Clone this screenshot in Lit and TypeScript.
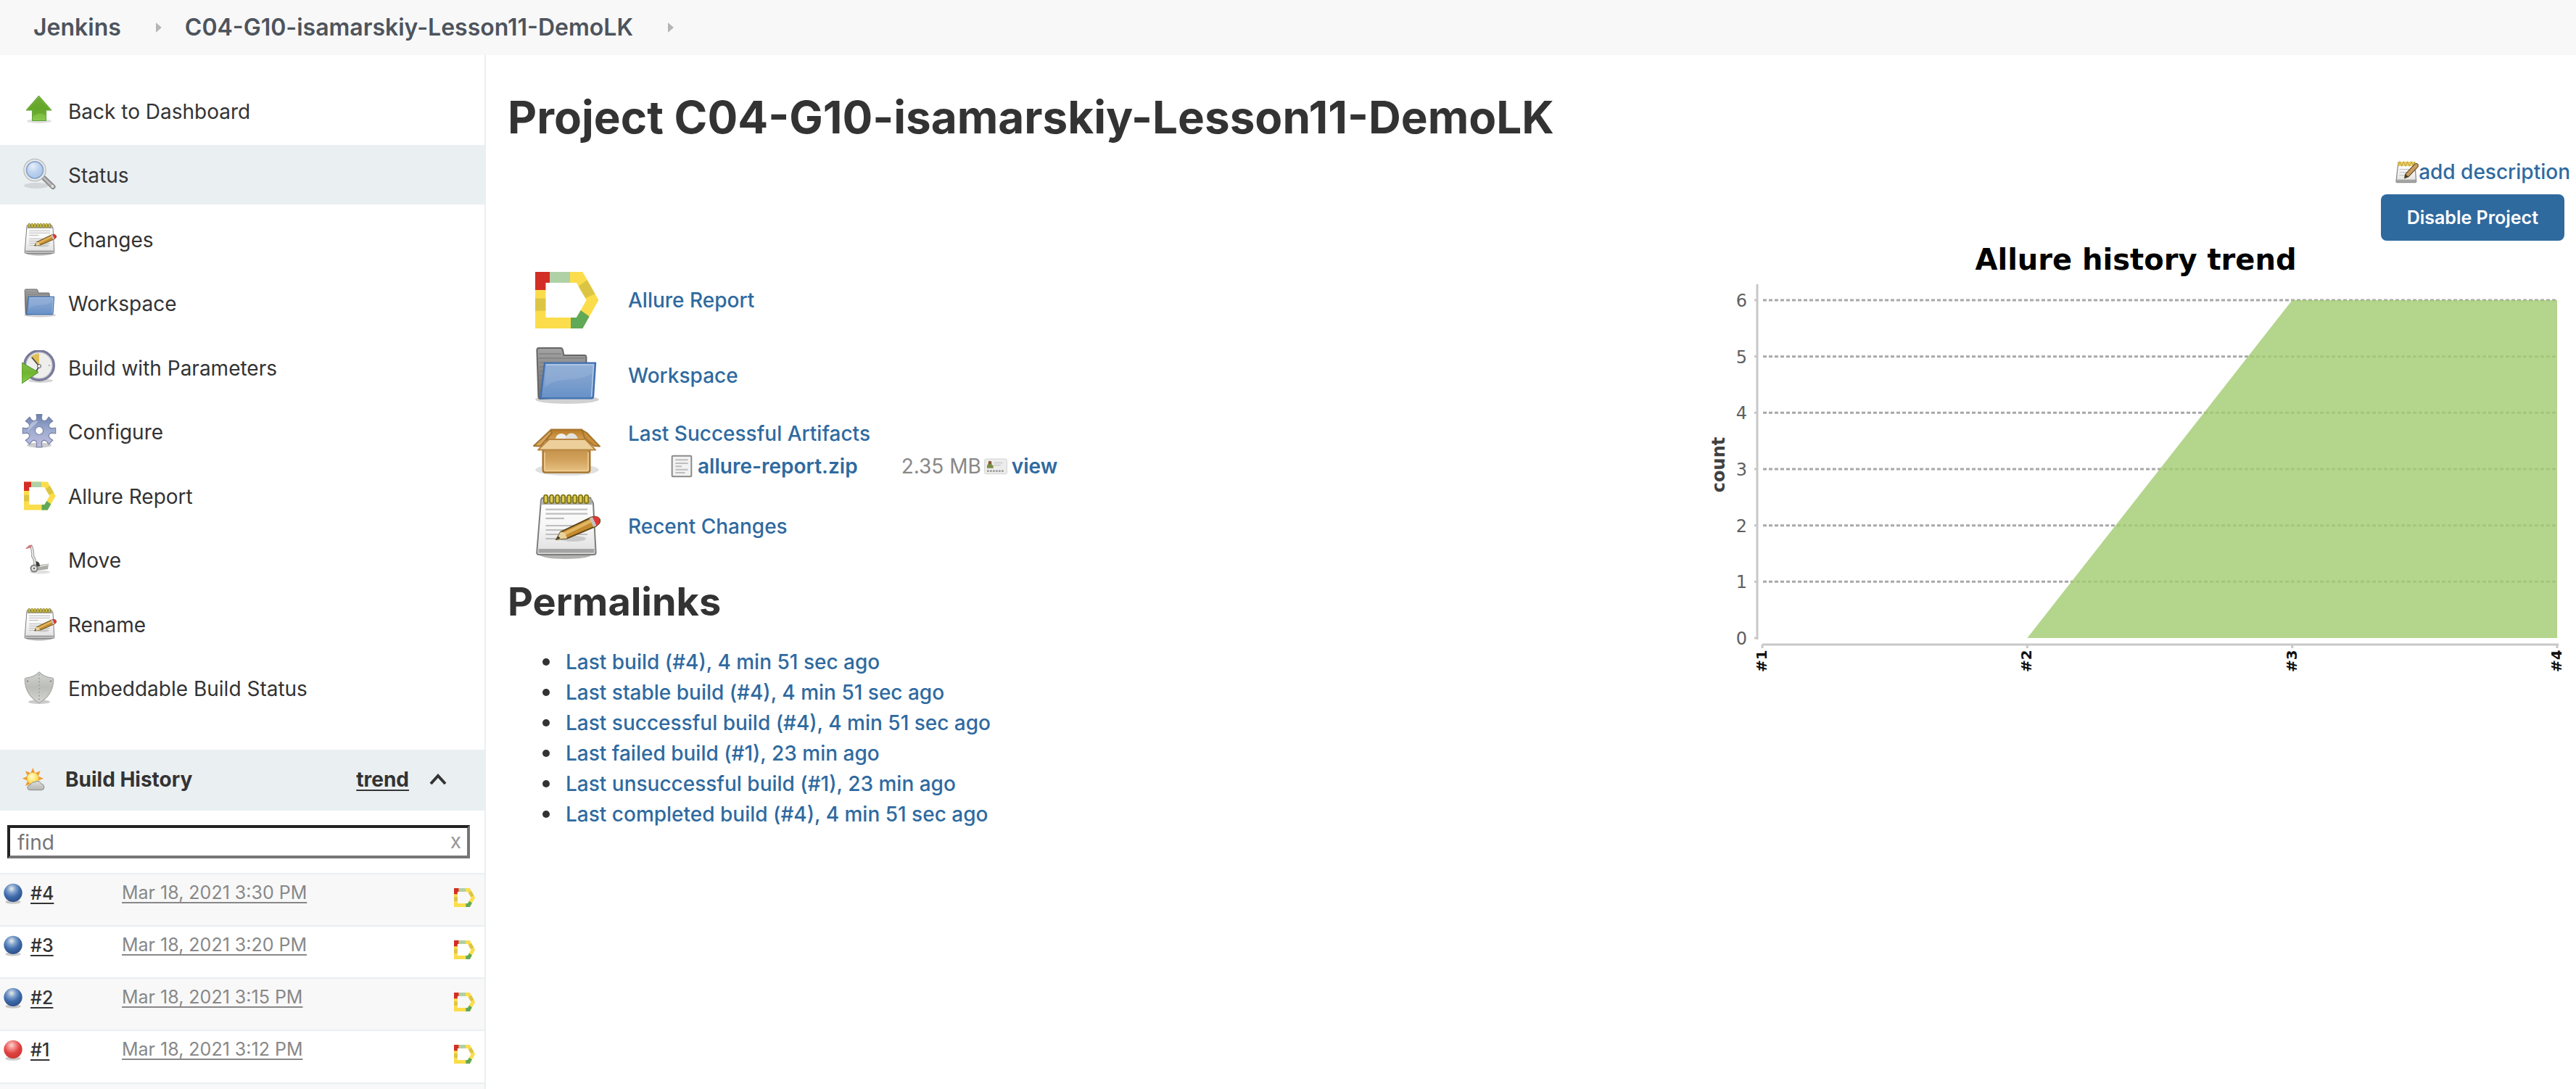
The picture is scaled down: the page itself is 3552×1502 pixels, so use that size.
import { LitElement, html, svg, css, nothing, type TemplateResult } from "lit";
import { customElement, state } from "lit/decorators.js";

/* ---------- icons ---------- */

const gearPath = (() => {
  const pts: string[] = [];
  for (let i = 0; i < 8; i++) {
    const base = (i * Math.PI) / 4 - Math.PI / 2;
    const at = (r: number, deg: number) => {
      const a = base + (deg * Math.PI) / 180;
      return `${(24 + r * Math.cos(a)).toFixed(2)} ${(23 + r * Math.sin(a)).toFixed(2)}`;
    };
    pts.push(at(15, -16), at(18, -10), at(23, -10), at(23, 10), at(18, 10), at(15, 16));
  }
  return `M${pts.join("L")}Z M24 17.5a5.5 5.5 0 1 0 0.01 0Z`;
})();

const shapes: Record<string, TemplateResult> = {
  up: svg`
    <ellipse cx="24" cy="38" rx="17" ry="3" fill="#000" opacity=".12"/>
    <path d="M23.5 3L41 23H33.5V37.500H14.500V23H6Z" fill="url(#g-green)" stroke="#5f9e35" stroke-width="1"/>
    <path d="M23.500 5L38 22H32.500V30C27 26 20 27 15.500 32V22H9Z" fill="#4d8a1c" opacity=".35"/>`,
  search: svg`
    <ellipse cx="20" cy="39" rx="17" ry="4" fill="#000" opacity=".1"/>
    <path d="M30 28L43 40.500" stroke="#8e8e8e" stroke-width="7" stroke-linecap="round"/>
    <path d="M31 29L42 39.500" stroke="#bdbdbd" stroke-width="3" stroke-linecap="round"/>
    <circle cx="42.500" cy="40" r="2" fill="#e4e4e4"/>
    <circle cx="18" cy="17.500" r="13.500" fill="url(#g-lens)" stroke="#b9bbbd" stroke-width="4.500"/>
    <circle cx="18" cy="17.500" r="13.500" fill="none" stroke="#e9eaeb" stroke-width="2"/>
    <circle cx="18" cy="17.500" r="11.300" fill="none" stroke="#7c9fd0" stroke-width="1.300"/>`,
  notepad: svg`
    <ellipse cx="24" cy="43.500" rx="18" ry="3" fill="#000" opacity=".3"/>
    <path d="M9 4.300H41L43 8L44.800 42Q44.800 43.500 43.300 43.500H5.700Q4 43.500 4.100 42L7 6Q7.200 4.300 9 4.300Z" fill="url(#g-paper)" stroke="#7d7d7a" stroke-width="1"/>
    <path d="M8 5H42L42.300 9H7.500Z" fill="#a9aca4"/>
    <path d="M5.300 39.500H43.700V42.300H5.200Z" fill="#a4a4a4"/>
    ${[10.3, 14.3, 18.3, 22.3, 26.3, 30.3, 34.3, 38.3].map(
      (x) => svg`<rect x=${x - 1.3} y="2.300" width="2.600" height="5.700" rx="1.300" fill="#dccd4e" stroke="#857618" stroke-width=".9"/>`,
    )}
    ${[
      [12.3, 39],
      [15.3, 39],
      [18.5, 23],
      [23.5, 39],
      [26.5, 36],
      [29.5, 39],
      [32.5, 22],
    ].map(([y, x]) => svg`<path d="M10.200 ${y}H${x}" stroke="#bebebe" stroke-width="1.100"/>`)}
    <ellipse cx="29" cy="32.500" rx="9" ry="2" fill="#000" opacity=".14"/>
    <path d="M17.600 33L20.500 27.800L41.500 17.800Q46 16.300 47.600 19.500Q48.300 21.500 45 23.800L25 32.300Z" fill="#c38b2e" stroke="#5b4418" stroke-width=".9"/>
    <path d="M22 28.500L41.500 19L42.500 21L23 30.500Z" fill="#e3b563"/>
    <path d="M17.600 33L20.500 27.800L23.500 28.500L25 32.300Z" fill="#e8d39c"/>
    <path d="M17.600 33L18.800 30.800L20.300 32.300Z" fill="#3c2f18"/>
    <path d="M40.300 18.400L42.500 17.500L45.300 23.500L43.200 24.500Z" fill="#c3c3c3"/>
    <path d="M42.500 17.500Q46.500 16.300 47.500 19.500Q48 21.700 45.300 23.500Z" fill="#e0383a"/>`,
  folder: svg`
    <ellipse cx="25" cy="40.500" rx="22" ry="3" fill="#000" opacity=".18"/>
    <path d="M5.500 5H20.500Q21.700 5 22 6.500L22.700 10H37Q38.200 10 38.200 11.500V38L6.500 40Q5.300 40 5.200 38.500L4.200 6.500Q4.200 5 5.500 5Z" fill="url(#g-gray)" stroke="#666" stroke-width="1"/>
    <path d="M5.500 9H21M5.500 12H37M6 15H10M6 18H9M6 21H9M6 24H9M6 27H8.500M6 30H8.500M6 33H8M6 36H8" stroke="#777" stroke-width=".7" opacity=".7"/>
    <path d="M9.500 15.300H44.500L43 38.500Q42.900 39.700 41.700 39.700H6.700Z" fill="url(#g-blue)" stroke="#4170b1" stroke-width="1.200" stroke-linejoin="round"/>
    <path d="M10.500 16.500H43.300L42.900 22C32 30 21 23 9.600 32Z" fill="#fff" opacity=".1"/>
    <path d="M10.400 16.500H43.200L41.800 38.500" fill="none" stroke="#b4cbe8" stroke-width=".7"/>`,
  clock: svg`
    <ellipse cx="26" cy="42" rx="17" ry="3" fill="#000" opacity=".16"/>
    <circle cx="24" cy="21" r="20" fill="#eeeeec" stroke="#7a7a9a" stroke-width="4"/>
    <circle cx="24" cy="21" r="18" fill="none" stroke="#c5c5cf" stroke-width="1.200"/>
    <path d="M24 21L12 10Q17 4.500 24 4.500Z" fill="#e0bf57"/>
    <path d="M24 22L14 10M24 22L19 31" stroke="#4a4a48" stroke-width="1.800"/>
    <circle cx="24" cy="22" r="2.500" fill="#eee" stroke="#555" stroke-width="1"/>
    <circle cx="38" cy="21" r="1" fill="#999"/>
    <path d="M0 17L23 30.500L0 46Z" fill="url(#g-green)" stroke="#4e8f28" stroke-width="1"/>`,
  gear: svg`
    <ellipse cx="24" cy="43" rx="17" ry="3.500" fill="#000" opacity=".2"/>
    <path d=${gearPath} fill="url(#g-gear)" fill-rule="evenodd" stroke="#7683a8" stroke-width="1.200" stroke-linejoin="round"/>
    <path d="M8 24C10 14 15 9 22 9C22 14 14 17 8 24Z" fill="#fff" opacity=".35"/>`,
  allure: svg`
    <path d="M3 4.500H35.700L46.700 24L35.700 43.500H3ZM10.200 12V36H31.400L38.300 24L31.400 12Z" fill="#fbdd4b" fill-rule="evenodd"/>
    <path d="M3 4.500H13V12H10.200V17H3Z" fill="#d32e25"/>
    <path d="M13 4.500H27V12H13Z" fill="#b0d0a5"/>
    <path d="M38.800 10L44.300 19.800L37.600 22.500L32.800 14.400Z" fill="#dcc544"/>
    <path d="M3 22.800H10.200V31.300H3Z" fill="#dcc544"/>
    <path d="M34.400 31L40.300 35.300L35.700 43.500H27.500V36H31.400Z" fill="#60a956"/>`,
  truck: svg`
    <ellipse cx="25" cy="41" rx="14" ry="2.500" fill="#000" opacity=".12"/>
    <path d="M13 5Q16 14 15 19Q19 24 18 33" fill="none" stroke="#9b9d99" stroke-width="4"/>
    <path d="M13 5Q16 14 15 19Q19 24 18 33" fill="none" stroke="#e9e9e7" stroke-width="2"/>
    <path d="M6 8.500L10 4.500L14 4L12 7Z" fill="#d98484" stroke="#c96a6a" stroke-width="1"/>
    <path d="M19 32L37 29.500L36 37L20 39Z" fill="#a9aca5"/>
    <path d="M21 34L36 31" stroke="#dfe0dc" stroke-width="1.500"/>
    <path d="M20 26Q25 27 25 33L20 34Z" fill="#3d3d3b"/>
    <circle cx="17" cy="36" r="4.500" fill="#e0e0de" stroke="#7d7f7b" stroke-width="2"/>
    <circle cx="17" cy="36" r="1.200" fill="#666"/>`,
  shield: svg`
    <ellipse cx="24" cy="43" rx="15" ry="3" fill="#000" opacity=".2"/>
    <path d="M24 2Q31 9 42 10Q44 10.500 43.800 13Q43 34 24 44.500Q5 34 4.200 13Q4 10.500 6 10Q17 9 24 2Z" fill="url(#g-shield)" stroke="#a9aba6" stroke-width="1.200"/>
    <path d="M24 5V42" stroke="#979992" stroke-width="1.600" stroke-dasharray="1.600 3.200"/>
    <circle cx="8" cy="14.500" r="1.200" fill="#8a8c87"/><circle cx="40" cy="14.500" r="1.200" fill="#8a8c87"/>`,
  weather: svg`
    ${[0, 45, 90, 135, 180, 225, 270, 315].map(
      (a) => svg`<path d="M23 0L27 10H19Z" fill="#f0992a" transform="rotate(${a} 23 22)"/>`,
    )}
    <circle cx="23" cy="22" r="12.500" fill="url(#g-sun)" stroke="#f0a63c" stroke-width="1.500"/>
    <path d="M17 46Q11 45.500 12 39.500Q13 35 18 35.500Q20 29 27 29.500Q31 26 36 28.500Q40 31 40.500 33Q46 34 46.500 40Q46 46 41 46Z" fill="url(#g-cloud)" stroke="#8d8d8a" stroke-width="1.500"/>`,
  box: svg`
    <ellipse cx="25" cy="37" rx="22" ry="4" fill="#000" opacity=".12"/>
    <path d="M14 9.300H35L38.500 17H11Z" fill="url(#g-inside)" stroke="#a3732c" stroke-width="1"/>
    <circle cx="21" cy="16" r="4" fill="#efefec"/><circle cx="28" cy="16" r="4.200" fill="#e2e2df"/>
    <path d="M13.500 9.700L2 20.500L6.500 20.800L14.500 11.500Z" fill="#d6a660" stroke="#a3732c" stroke-width="1" stroke-linejoin="round"/>
    <path d="M35.500 9.700L38.500 11.500L47.500 20.800L43.500 20.500L37 15Z" fill="#c9903f" stroke="#a3732c" stroke-width="1" stroke-linejoin="round"/>
    <path d="M8.300 22.500H40.700V37Q40.700 38.800 39 38.800H10Q8.300 38.800 8.300 37Z" fill="url(#g-box)" stroke="#a3732c" stroke-width="1.100"/>
    <path d="M9.500 25V36.500Q9.500 37.600 10.500 37.600H38.500Q39.500 37.600 39.500 36.500V25" fill="none" stroke="#f0cd92" stroke-width=".8"/>
    <path d="M12.500 16H37.500L44.600 23.300H4.900Z" fill="#edcf9b" stroke="#b98540" stroke-width="1" stroke-linejoin="round"/>`,
  file: svg`
    <rect x="4" y="2.500" width="40" height="43" rx="2" fill="#f2f2f2" stroke="#8b8b89" stroke-width="3"/>
    <path d="M11 11H37M11 18H37M11 24.500H24M11 31H37M11 37.500H31" stroke="#bdbdbd" stroke-width="3"/>`,
  card: svg`
    <rect x="1" y="9" width="46" height="31" rx="3" fill="#ececec" stroke="#d2d2d0" stroke-width="1.500"/>
    <path d="M6 28V22Q9 20 9 16Q12 12 15 16Q15 21 19 23V28Z" fill="#7b8c44"/>
    <circle cx="12" cy="16.500" r="3.500" fill="#8a5a35"/>
    <path d="M20 17H38M20 22H34" stroke="#cdcdcd" stroke-width="2.500"/>
    <path d="M6 34H42" stroke="#8e8e8e" stroke-width="3.500" stroke-dasharray="4 2"/>`,
  edit: svg`
    <path d="M6 4H40L43 44Q43 46 41 46H3Q1.500 46 1.500 44Z" fill="url(#g-paper)" stroke="#8f8f8c" stroke-width="2"/>
    <path d="M3 40H42V45H3Z" fill="#a4a4a2"/>
    <path d="M8 19H30M8 25H28M8 31H24" stroke="#c4c4c4" stroke-width="2"/>
    <path d="M6 3H40V12H5Z" fill="#e8cf6d"/>
    <path d="M6 12L9 3L13 12L17 3L21 12L25 3L29 12L33 3L37 12L40 3" fill="none" stroke="#c9a93a" stroke-width="1.600"/>
    <path d="M19 37L20.500 29L40 8Q43 5.500 46 8Q48 11 46 14L27 34Z" fill="#c99f62" stroke="#6a5130" stroke-width="1.800"/>
    <path d="M19 37L20.500 29L27 34Z" fill="#3f3524"/>`,
  blue: svg`<ellipse cx="24" cy="42" rx="16" ry="4" fill="#000" opacity=".2"/><circle cx="24" cy="23" r="19" fill="url(#g-ballblue)"/>`,
  red: svg`<ellipse cx="24" cy="42" rx="16" ry="4" fill="#000" opacity=".2"/><circle cx="24" cy="23" r="19" fill="url(#g-ballred)"/>`,
};

const icon = (name: string, size = "md") =>
  html`<svg class="icon ${size}" viewBox="0 0 48 48" aria-hidden="true">${shapes[name]}</svg>`;

const linear = (id: string, ...stops: string[]) => svg`
  <linearGradient id=${id} x1="0" y1="0" x2="0" y2="1">
    ${stops.map((c, i) => svg`<stop offset=${i / (stops.length - 1)} stop-color=${c}/>`)}
  </linearGradient>`;

const radial = (id: string, cx: number, cy: number, ...stops: string[]) => svg`
  <radialGradient id=${id} cx=${cx} cy=${cy} r=".68">
    ${stops.map((c, i) => svg`<stop offset=${i / (stops.length - 1)} stop-color=${c}/>`)}
  </radialGradient>`;

const gradients = html`<svg class="defs" width="0" height="0" aria-hidden="true">
  <defs>
    ${linear("g-green", "#86bb4c", "#6fb52f", "#8ac94d")}
    ${linear("g-paper", "#ffffff", "#f6f6f6", "#dedede")}
    ${linear("g-gray", "#a3a3a3", "#868686", "#6f6f6f")}
    ${linear("g-blue", "#87a8d3", "#7d9fce", "#6791c8")}
    ${linear("g-gear", "#6a7fae", "#9eabd0", "#c2bfe0")}
    ${linear("g-shield", "#d3d4d1", "#bbbdb8", "#d6d7d4")}
    ${linear("g-cloud", "#dededc", "#b4b4b1")}
    ${linear("g-box", "#c4914a", "#d3a45e", "#e8c384")}
    ${linear("g-inside", "#b87b27", "#d9a455")}
    ${radial("g-lens", 0.4, 0.3, "#e6effa", "#bcd2ee", "#a9c4e8")}
    ${radial("g-sun", 0.4, 0.35, "#fffbd9", "#ffe97a", "#f9cd4a")}
    ${radial("g-ballblue", 0.42, 0.28, "#e9ede6", "#7fa0cd", "#3f6bab", "#2f538f")}
    ${radial("g-ballred", 0.42, 0.28, "#fbd5d3", "#f08481", "#e0403f", "#cf3a38")}
  </defs>
</svg>`;

/* ---------- data ---------- */

const tasks = [
  { icon: "up", label: "Back to Dashboard" },
  { icon: "search", label: "Status", current: true },
  { icon: "notepad", label: "Changes" },
  { icon: "folder", label: "Workspace" },
  { icon: "clock", label: "Build with Parameters" },
  { icon: "gear", label: "Configure" },
  { icon: "allure", label: "Allure Report" },
  { icon: "truck", label: "Move" },
  { icon: "notepad", label: "Rename" },
  { icon: "shield", label: "Embeddable Build Status" },
];

const builds = [
  { id: 4, time: "Mar 18, 2021 3:30 PM", ball: "blue" },
  { id: 3, time: "Mar 18, 2021 3:20 PM", ball: "blue" },
  { id: 2, time: "Mar 18, 2021 3:15 PM", ball: "blue" },
  { id: 1, time: "Mar 18, 2021 3:12 PM", ball: "red" },
];

const permalinks = [
  "Last build (#4), 4 min 51 sec ago",
  "Last stable build (#4), 4 min 51 sec ago",
  "Last successful build (#4), 4 min 51 sec ago",
  "Last failed build (#1), 23 min ago",
  "Last unsuccessful build (#1), 23 min ago",
  "Last completed build (#4), 4 min 51 sec ago",
];

/* ---------- trend chart ---------- */

@customElement("trend-chart")
export class TrendChart extends LitElement {
  static styles = css`
    :host {
      display: block;
    }
    .chart {
      display: block;
      width: 100%;
      height: auto;
      font-family: "DejaVu Sans", sans-serif;
    }
    .title {
      font-size: 40px;
      font-weight: 700;
      fill: #000;
    }
    .tick {
      font-size: 24px;
      fill: #606060;
    }
    .axis-name {
      font-size: 24px;
      font-weight: 700;
      fill: #404040;
    }
    .build {
      font-size: 20px;
      font-weight: 700;
      fill: #111;
    }
    .axis {
      stroke: #c8c8c8;
      stroke-width: 3;
    }
    .grid {
      stroke: #a8a8a8;
      stroke-width: 3;
      stroke-dasharray: 5 3;
    }
    .area {
      fill: #a4cc73;
      fill-opacity: 0.82;
    }
  `;

  private values = [0, 0, 6, 6];

  render() {
    const x = (i: number) => 86 + (i * 1096) / 3;
    const y = (v: number) => 548 - (v * 466) / 6;
    const area = `${x(1)},${y(0)} ${this.values
      .slice(1)
      .map((v, i) => `${x(i + 1)},${y(v)}`)
      .join(" ")} ${x(3)},${y(0)}`;
    return html`<svg class="chart" viewBox="0 0 1200 600" role="img" aria-label="Allure history trend">
      <text class="title" x="601" y="40" text-anchor="middle">Allure history trend</text>
      <text class="axis-name" transform="translate(34 309) rotate(-90)" text-anchor="middle">count</text>
      ${[0, 1, 2, 3, 4, 5, 6].map(
        (v) => svg`
          <text class="tick" x="65" y=${y(v) + 9} text-anchor="end">${v}</text>
          <path class="axis" d="M75 ${y(v)}H79"/>
          ${v ? svg`<path class="grid" d="M87 ${y(v)}H1183"/>` : nothing}`,
      )}
      <path class="axis" d="M79 60V550"/>
      <polygon class="area" points=${area} />
      <path class="axis" d="M86 557H1184"/>
      ${this.values.map(
        (_, i) => svg`
          <path class="axis" d="M${x(i)} 557V562"/>
          <text class="build" transform="translate(${x(i) + 6} 595) rotate(-90)">#${i + 1}</text>`,
      )}
    </svg>`;
  }
}

/* ---------- page ---------- */

@customElement("app-root")
export class AppRoot extends LitElement {
  static styles = css`
    :host {
      display: flex;
      flex-direction: column;
      min-height: 100vh;
      background: #fff;
      color: #333;
      font-family: Inter, "Liberation Sans", sans-serif;
      font-size: 28px;
      line-height: 42px;
    }
    a {
      color: #2f6a9f;
      font-weight: 500;
      text-decoration: none;
    }
    .defs {
      position: absolute;
    }
    .icon {
      display: block;
      flex: none;
      width: 48px;
      height: 48px;
    }
    .icon.sm {
      width: 32px;
      height: 32px;
    }
    .icon.lg {
      width: 96px;
      height: 96px;
    }

    .crumbs {
      display: flex;
      align-items: center;
      height: 76px;
      padding: 0 46px;
      background: #f8f8f8;
      font-size: 32px;
    }
    .crumbs a {
      color: #4d545d;
      font-weight: 600;
    }
    .arrow {
      width: 8px;
      height: 14px;
      margin: 0 32px 0 48px;
      background: #b5b5b5;
      clip-path: polygon(0 0, 100% 50%, 0 100%);
    }

    .page {
      display: flex;
      flex: 1;
    }
    .side {
      display: flex;
      flex-direction: column;
      flex: none;
      width: 668px;
      border-right: 2px solid #eaeff2;
    }
    .tasks {
      display: flex;
      flex-direction: column;
      justify-content: space-between;
      height: 878px;
      margin: 36px 0 44px;
    }
    .task {
      display: flex;
      align-items: center;
      gap: 16px;
      height: 82px;
      padding-left: 30px;
      color: #333;
      font-weight: 400;
    }
    .task span {
      padding-top: 2px;
    }
    .task.current {
      background: #eaeff2;
    }
    .history-head {
      display: flex;
      align-items: center;
      box-sizing: border-box;
      height: 84px;
      padding: 0 52px 2px 30px;
      background: #eaeff2;
    }
    .history-title {
      flex: 1;
      margin: 0 0 0 28px;
      font-size: 28px;
      font-weight: 700;
    }
    .trend {
      color: #333;
      font-weight: 700;
      text-decoration: underline;
      text-decoration-thickness: 2px;
      text-underline-offset: 4px;
    }
    .toggle {
      margin-left: 28px;
      padding: 0;
      border: 0;
      background: none;
    }
    .chevron {
      display: block;
      width: 24px;
      height: 16px;
    }
    .search {
      position: relative;
      padding: 20px 20px 20px 10px;
    }
    .find {
      display: block;
      box-sizing: border-box;
      width: 100%;
      height: 46px;
      padding: 2px 40px 0 10px;
      border: 4px solid #767676;
      border-top-color: #222;
      border-left-color: #222;
      background: #fff;
      color: #333;
      font: inherit;
      line-height: 36px;
    }
    .find::placeholder {
      color: #757575;
      opacity: 1;
    }
    .clear {
      position: absolute;
      top: 28px;
      right: 32px;
      padding: 0;
      border: 0;
      background: none;
      color: #999;
      font: inherit;
      line-height: 28px;
    }
    .builds {
      width: 100%;
      border-collapse: collapse;
      font-size: 25px;
      line-height: 30px;
    }
    .build td {
      box-sizing: border-box;
      height: 72px;
      padding: 10px 0 0;
      border-top: 2px solid #eaeff2;
      vertical-align: top;
    }
    .build:nth-child(odd) {
      background: #f8f8f8;
    }
    .build a {
      font-weight: 500;
      text-decoration: underline;
      text-decoration-thickness: 2px;
      text-underline-offset: 4px;
    }
    .build .number {
      display: flex;
      align-items: center;
      gap: 8px;
      padding-left: 2px;
      color: #333;
      text-decoration: none;
    }
    .number span {
      text-decoration: underline;
      text-decoration-thickness: 2px;
      text-underline-offset: 4px;
    }
    .c-number {
      width: 168px;
    }
    .c-report {
      width: 44px;
    }
    .c-report a {
      display: block;
      padding-top: 6px;
    }
    .build .time {
      color: #888;
      font-weight: 400;
    }
    .rest {
      flex: 1;
      border-top: 2px solid #eaeff2;
      background: #f8f8f8;
    }

    .main {
      flex: 1;
      min-width: 0;
      padding: 44px 8px 0 30px;
    }
    .title {
      margin: 0;
      font-size: 62px;
      font-weight: 700;
      line-height: 84px;
    }
    .columns {
      display: flex;
      justify-content: space-between;
      gap: 40px;
      padding-top: 10px;
    }
    .content {
      flex: 1;
      padding-top: 148px;
    }
    .summary {
      margin-left: 28px;
      border-collapse: collapse;
    }
    .summary .cell {
      height: 104px;
      padding: 0;
      vertical-align: middle;
    }
    .summary .pic {
      width: 138px;
      padding-left: 4px;
      box-sizing: border-box;
    }
    .files {
      margin-left: 58px;
      border-collapse: collapse;
      line-height: 48px;
    }
    .files td {
      padding: 0;
    }
    .file,
    .view {
      display: flex;
      align-items: center;
      gap: 6px;
      font-weight: 600;
    }
    .size {
      color: #888;
    }
    .files .c-size {
      padding-left: 60px;
      padding-right: 4px;
    }
    .sub {
      margin: 20px 0 30px;
      font-size: 54px;
      font-weight: 700;
      line-height: 64px;
    }
    .links {
      margin: 0;
      padding-left: 48px;
      list-style: none;
    }
    .link {
      display: flex;
      align-items: center;
      gap: 22px;
    }
    .link::before {
      content: "";
      width: 10px;
      height: 10px;
      border-radius: 50%;
      background: #333;
    }
    .aside {
      display: flex;
      flex-direction: column;
      align-items: flex-end;
      flex: 0 1 1200px;
    }
    .describe {
      display: flex;
      align-items: center;
      margin-top: 2px;
    }
    .disable {
      height: 64px;
      margin: 10px 8px 0 0;
      padding: 0 36px;
      border: 0;
      border-radius: 8px;
      background: #2f6a9f;
      color: #fff;
      font: inherit;
      font-size: 25px;
      font-weight: 600;
    }
    .trend-plot {
      width: 100%;
    }
  `;

  @state() private open = true;
  @state() private query = "";

  private renderHistory() {
    const shown = builds.filter((b) => `#${b.id} ${b.time}`.toLowerCase().includes(this.query.toLowerCase()));
    return html`
      <div class="search">
        <input
          class="find"
          type="text"
          placeholder="find"
          aria-label="Find in build history"
          .value=${this.query}
          @input=${(e: InputEvent) => (this.query = (e.target as HTMLInputElement).value)}
        />
        <button class="clear" type="button" aria-label="Clear" @click=${() => (this.query = "")}>x</button>
      </div>
      <table class="builds">
        <tbody>
          ${shown.map(
            (b) => html`<tr class="build">
              <td class="c-number"><a class="number" href="#${b.id}">${icon(b.ball, "sm")}<span>#${b.id}</span></a></td>
              <td><a class="time" href="#${b.id}">${b.time}</a></td>
              <td class="c-report"><a href="#allure-${b.id}" aria-label="Allure Report">${icon("allure", "sm")}</a></td>
            </tr>`,
          )}
        </tbody>
      </table>
    `;
  }

  private summaryRow(name: string, content: TemplateResult) {
    return html`<tr>
      <td class="cell pic">${icon(name, "lg")}</td>
      <td class="cell">${content}</td>
    </tr>`;
  }

  render() {
    return html`
      ${gradients}
      <nav class="crumbs" aria-label="Breadcrumb">
        <a href="#jenkins">Jenkins</a><span class="arrow"></span>
        <a href="#project">C04-G10-isamarskiy-Lesson11-DemoLK</a><span class="arrow"></span>
      </nav>
      <div class="page">
        <aside class="side">
          <nav class="tasks" aria-label="Project">
            ${tasks.map(
              (t) => html`<a class="task ${t.current ? "current" : ""}" href="#task">${icon(t.icon)}<span>${t.label}</span></a>`,
            )}
          </nav>
          <div class="history-head">
            ${icon("weather", "sm")}
            <h2 class="history-title">Build History</h2>
            <a class="trend" href="#trend">trend</a>
            <button class="toggle" type="button" aria-label="Toggle build history" @click=${() => (this.open = !this.open)}>
              <svg class="chevron" viewBox="0 0 24 16"><path d="M2 14L12 3L22 14" fill="none" stroke="#333" stroke-width="4" /></svg>
            </button>
          </div>
          ${this.open ? this.renderHistory() : nothing}
          <div class="rest"></div>
        </aside>
        <main class="main">
          <h1 class="title">Project C04-G10-isamarskiy-Lesson11-DemoLK</h1>
          <div class="columns">
            <section class="content">
              <table class="summary">
                <tbody>
                  ${this.summaryRow("allure", html`<a href="#allure">Allure Report</a>`)}
                  ${this.summaryRow("folder", html`<a href="#ws">Workspace</a>`)}
                  ${this.summaryRow(
                    "box",
                    html`<a href="#artifacts">Last Successful Artifacts</a>
                      <table class="files">
                        <tbody>
                          <tr>
                            <td><a class="file" href="#zip">${icon("file", "sm")}allure-report.zip</a></td>
                            <td class="c-size"><span class="size">2.35 MB</span></td>
                            <td><a class="view" href="#view">${icon("card", "sm")}view</a></td>
                          </tr>
                        </tbody>
                      </table>`,
                  )}
                  ${this.summaryRow("notepad", html`<a href="#changes">Recent Changes</a>`)}
                </tbody>
              </table>
              <h2 class="sub">Permalinks</h2>
              <ul class="links">
                ${permalinks.map((p) => html`<li class="link"><a href="#build">${p}</a></li>`)}
              </ul>
            </section>
            <section class="aside">
              <a class="describe" href="#describe">${icon("edit", "sm")}add description</a>
              <button class="disable" type="button">Disable Project</button>
              <trend-chart class="trend-plot"></trend-chart>
            </section>
          </div>
        </main>
      </div>
    `;
  }
}
